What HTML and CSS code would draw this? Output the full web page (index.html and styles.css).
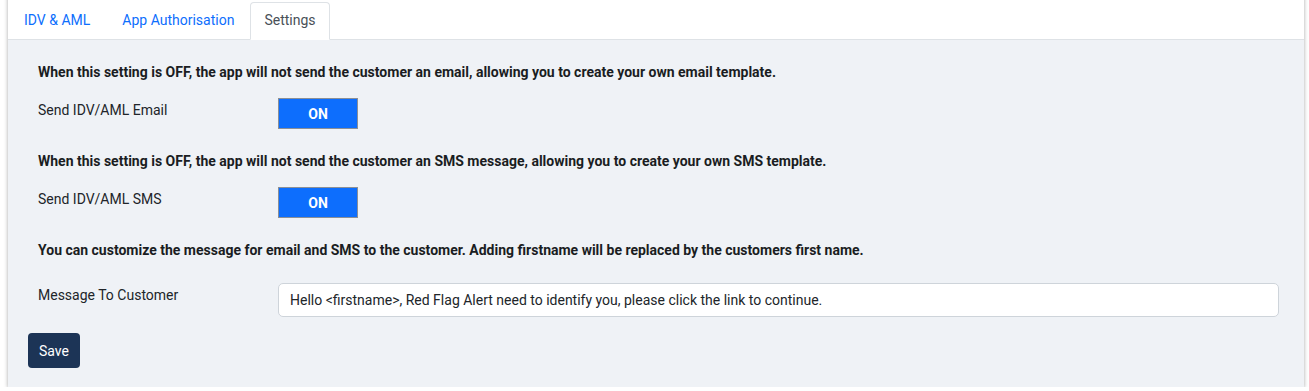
FILE: index.html
```html
<!DOCTYPE html>
<html lang="en">
<head>
<meta charset="utf-8">
<title>Settings</title>
<link rel="stylesheet" href="styles.css">
</head>
<body>
<div class="page">
  <div class="card">
    <ul class="tabs">
      <li><a class="tab" href="#">IDV &amp; AML</a></li>
      <li><a class="tab" href="#">App Authorisation</a></li>
      <li><a class="tab active" href="#">Settings</a></li>
    </ul>
    <div class="content">
      <p class="note">When this setting is OFF, the app will not send the customer an email, allowing you to create your own email template.</p>
      <div class="row">
        <label class="label">Send IDV/AML Email</label>
        <div class="field"><button class="toggle" type="button">ON</button></div>
      </div>
      <p class="note">When this setting is OFF, the app will not send the customer an SMS message, allowing you to create your own SMS template.</p>
      <div class="row">
        <label class="label">Send IDV/AML SMS</label>
        <div class="field"><button class="toggle" type="button">ON</button></div>
      </div>
      <p class="note">You can customize the message for email and SMS to the customer. Adding firstname will be replaced by the customers first name.</p>
      <div class="row row-msg">
        <label class="label">Message To Customer</label>
        <div class="field"><input class="input" type="text" value="Hello <firstname>, Red Flag Alert need to identify you, please click the link to continue."></div>
      </div>
      <button class="save" type="button">Save</button>
    </div>
  </div>
</div>
</body>
</html>
```

FILE: styles.css
```css
html, body {
  margin: 0;
  padding: 0;
  background: #ffffff;
}
body {
  font-family: Roboto, "Noto Sans", sans-serif;
  font-size: 14px;
  line-height: 21px;
  color: #212529;
}
.page {
  padding: 0 5px 0 8px;
}
.card {
  margin-top: -6px;
  padding-top: 8px;
  background: #ffffff;
  box-shadow: 0 1px 4px rgba(0, 0, 0, 0.35);
}
.tabs {
  list-style: none;
  margin: 0;
  padding: 0;
  display: flex;
  border-bottom: 1px solid #dee2e6;
}
.tabs li {
  margin-bottom: -1px;
}
.tab {
  display: block;
  padding: 7px 15px 8px;
  border: 1px solid transparent;
  border-radius: 4px 4px 0 0;
  color: #0d6efd;
  text-decoration: none;
}
.tab.active {
  padding: 7px 13px 8px;
  color: #495057;
  background: #ffffff;
  border-color: #dee2e6 #dee2e6 #ffffff;
}
.content {
  background: #eff2f6;
  padding: 22px 25px 19px 20px;
}
.note {
  margin: 0 0 15px 10px;
  font-weight: 700;
  color: #1a1d22;
}
.row {
  display: grid;
  grid-template-columns: 250px 1fr;
  align-items: start;
  margin-bottom: 22px;
}
.label {
  padding: 2px 0 0 10px;
}
.row-msg {
  margin-top: 22px;
  margin-bottom: 16px;
}
.toggle {
  width: 80px;
  height: 31px;
  padding: 0;
  border: 1px solid #8a8f96;
  border-radius: 0;
  background: #0d6efd;
  color: #ffffff;
  font-family: inherit;
  font-size: 14px;
  font-weight: 700;
}
.input {
  box-sizing: border-box;
  width: 100%;
  height: 34px;
  padding: 6px 11px;
  border: 1px solid #ced4da;
  border-radius: 5px;
  background: #ffffff;
  font-family: inherit;
  font-size: 14px;
  color: #212529;
}
.save {
  height: 35px;
  padding: 0 11px;
  border: none;
  border-radius: 4px;
  background: #1c3456;
  color: #ffffff;
  font-family: inherit;
  font-size: 14px;
}
```
